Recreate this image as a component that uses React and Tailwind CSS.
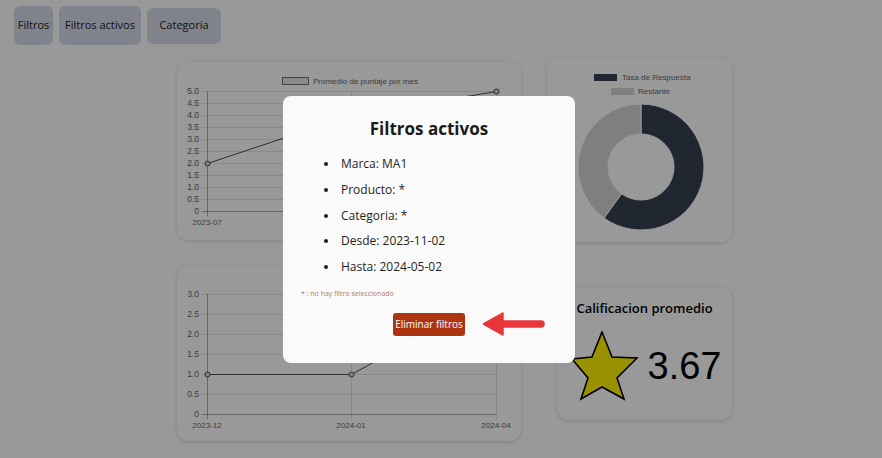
// Dashboard with "Filtros activos" modal open
const lineGrid = (values, top, step) =>
  values.map((v, i) => ({ label: v, y: top + i * step }));

function LineChart({ yLabels, step, points, xLabels, legend }) {
  const rows = lineGrid(yLabels, 29, step);
  const bottom = rows[rows.length - 1].y;
  return (
    <svg width="344" height="178" className="block font-['Liberation_Sans',Arial,sans-serif]">
      {legend && (
        <g>
          <rect x="105.5" y="15.5" width="26" height="7" fill="#e5e5e5" stroke="#777" strokeWidth="1" />
          <text x="136" y="22" fontSize="8" fill="#666">{legend}</text>
        </g>
      )}
      {rows.map((r) => (
        <g key={r.label}>
          <line x1="25" x2="319" y1={r.y + 0.5} y2={r.y + 0.5} stroke="rgba(0,0,0,0.1)" />
          <text x="22" y={r.y + 3} fontSize="8.5" fill="#666" textAnchor="end">{r.label}</text>
        </g>
      ))}
      {[30, 174, 319].map((x) => (
        <line key={x} x1={x + 0.5} x2={x + 0.5} y1="29" y2={bottom + 5} stroke="rgba(0,0,0,0.1)" />
      ))}
      <line x1="30.5" x2="30.5" y1="29" y2={bottom + 5} stroke="rgba(0,0,0,0.25)" />
      <line x1="25" x2="319" y1={bottom + 0.5} y2={bottom + 0.5} stroke="rgba(0,0,0,0.25)" />
      {xLabels.map((l) => (
        <text key={l.t} x={l.x} y={bottom + 14} fontSize="8" fill="#666" textAnchor="middle">{l.t}</text>
      ))}
      <polyline points={points.map((p) => p.join(',')).join(' ')} fill="none" stroke="#4a4f5c" strokeWidth="1" />
      {points.map((p) => (
        <circle key={p.join('-')} cx={p[0]} cy={p[1]} r="2.5" fill="#d8d8d8" stroke="#4a4f5c" strokeWidth="1" />
      ))}
    </svg>
  );
}

function Donut() {
  return (
    <svg width="185" height="184" className="block font-['Liberation_Sans',Arial,sans-serif]">
      <rect x="47" y="16" width="23" height="7" fill="#374151" />
      <text x="75" y="22" fontSize="8" fill="#666">Tasa de Respuesta</text>
      <rect x="64" y="30" width="23" height="7" fill="#d4d4d4" />
      <text x="91" y="36" fontSize="8" fill="#666">Restante</text>
      <path d="M94 46 A63 63 0 1 1 57 160 L74.6 135.7 A33 33 0 1 0 94 76 Z" fill="#374151" stroke="#fff" strokeWidth="1" />
      <path d="M57 160 A63 63 0 0 1 94 46 L94 76 A33 33 0 0 0 74.6 135.7 Z" fill="#d4d4d4" stroke="#fff" strokeWidth="1" />
    </svg>
  );
}

function Star() {
  return (
    <svg width="68" height="70" viewBox="0 0 68 70" className="block">
      <polygon
        points="31,1 41,26 66,27 46,47 53,68 31,56 10,68 17,47 1,28 21,26"
        fill="#fff200"
        stroke="#000"
        strokeWidth="1.6"
        strokeLinejoin="miter"
      />
    </svg>
  );
}

export default function App() {
  const filters = [
    'Marca: MA1',
    'Producto: *',
    'Categoria: *',
    'Desde: 2023-11-02',
    'Hasta: 2024-05-02',
  ];

  return (
    <div className="relative h-[458px] w-full overflow-hidden bg-white font-['Open_Sans',sans-serif] text-[#1f1f1f]">
      {/* top buttons */}
      <div className="flex items-center gap-[6px] pl-[14px] pt-[6px]">
        <button className="h-[39px] w-[39px] rounded-md bg-[#d5dbe8] text-[11px] text-[#222]">Filtros</button>
        <button className="h-[39px] w-[82px] rounded-md bg-[#d5dbe8] text-[11px] text-[#222]">Filtros activos</button>
        <button className="h-[36px] w-[74px] rounded-md bg-[#d5dbe8] text-[11px] text-[#222]">Categoria</button>
      </div>

      {/* cards */}
      <div className="flex pl-[177px]">
        <div className="flex w-[344px] flex-col">
          <div className="mt-[17px] h-[178px] rounded-xl bg-white shadow-[0_1px_4px_rgba(0,0,0,0.15)]">
            <LineChart
              legend="Promedio de puntaje por mes"
              yLabels={['5.0', '4.5', '4.0', '3.5', '3.0', '2.5', '2.0', '1.5', '1.0', '0.5', '0']}
              step={12}
              points={[[30.5, 101.5], [174.5, 53.5], [319.5, 29.5]]}
              xLabels={[{ t: '2023-07', x: 30 }]}
            />
          </div>
          <div className="mt-[25px] h-[176px] rounded-xl bg-white shadow-[0_1px_4px_rgba(0,0,0,0.15)]">
            <LineChart
              yLabels={['3.0', '2.5', '2.0', '1.5', '1.0', '0.5', '0']}
              step={20}
              points={[[30.5, 109.5], [174.5, 109.5], [319.5, 29.5]]}
              xLabels={[{ t: '2023-12', x: 30 }, { t: '2024-01', x: 174 }, { t: '2024-04', x: 319 }]}
            />
          </div>
        </div>
        <div className="ml-[26px] flex flex-col">
          <div className="mt-[13px] h-[184px] w-[185px] rounded-xl bg-white shadow-[0_1px_4px_rgba(0,0,0,0.15)]">
            <Donut />
          </div>
          <div className="ml-[10px] mt-[45px] flex h-[133px] w-[175px] flex-col items-center rounded-xl bg-white pt-[12px] shadow-[0_1px_4px_rgba(0,0,0,0.15)]">
            <div className="text-[13px] font-semibold text-black">Calificacion promedio</div>
            <div className="mt-[12px] flex items-center gap-[9px] pl-[3px]">
              <Star />
              <span className="font-['Liberation_Sans',Arial,sans-serif] text-[38px] leading-none text-black">3.67</span>
            </div>
          </div>
        </div>
      </div>

      {/* overlay */}
      <div className="absolute inset-0 bg-black/40" />

      {/* modal */}
      <div className="absolute inset-0 flex items-center justify-center pr-[24px]">
        <div className="flex h-[267px] w-[292px] flex-col rounded-lg bg-[#fafafa] px-[18px] pt-[20px]">
          <h2 className="text-center text-[17px] font-bold text-[#1b1b1b]">Filtros activos</h2>
          <ul className="mt-[10px] list-disc pl-[38px] text-[12px] text-[#1f1f1f]">
            {filters.map((f) => (
              <li key={f} className="h-[25.75px] pl-[2px] leading-[26px] marker:text-[#1f1f1f]">{f}</li>
            ))}
          </ul>
          <p className="mt-[9px] text-[7px] text-[#b6785e]">* : no hay filtro seleccionado</p>
          <div className="relative mt-[14px] flex justify-center">
            <button className="h-[23px] w-[72px] rounded-[3px] bg-[#ad3411] text-[10px] text-white">Eliminar filtros</button>
            <svg className="absolute left-[182px] top-[-1px]" width="62" height="24" viewBox="0 0 62 24">
              <path d="M0 12 L20 1 L20 9 L58 9 Q61 9 61 12 Q61 15 58 15 L20 15 L20 23 Z" fill="#e8373a" strokeLinejoin="round" stroke="#e8373a" strokeWidth="1.5" />
            </svg>
          </div>
        </div>
      </div>
    </div>
  );
}
